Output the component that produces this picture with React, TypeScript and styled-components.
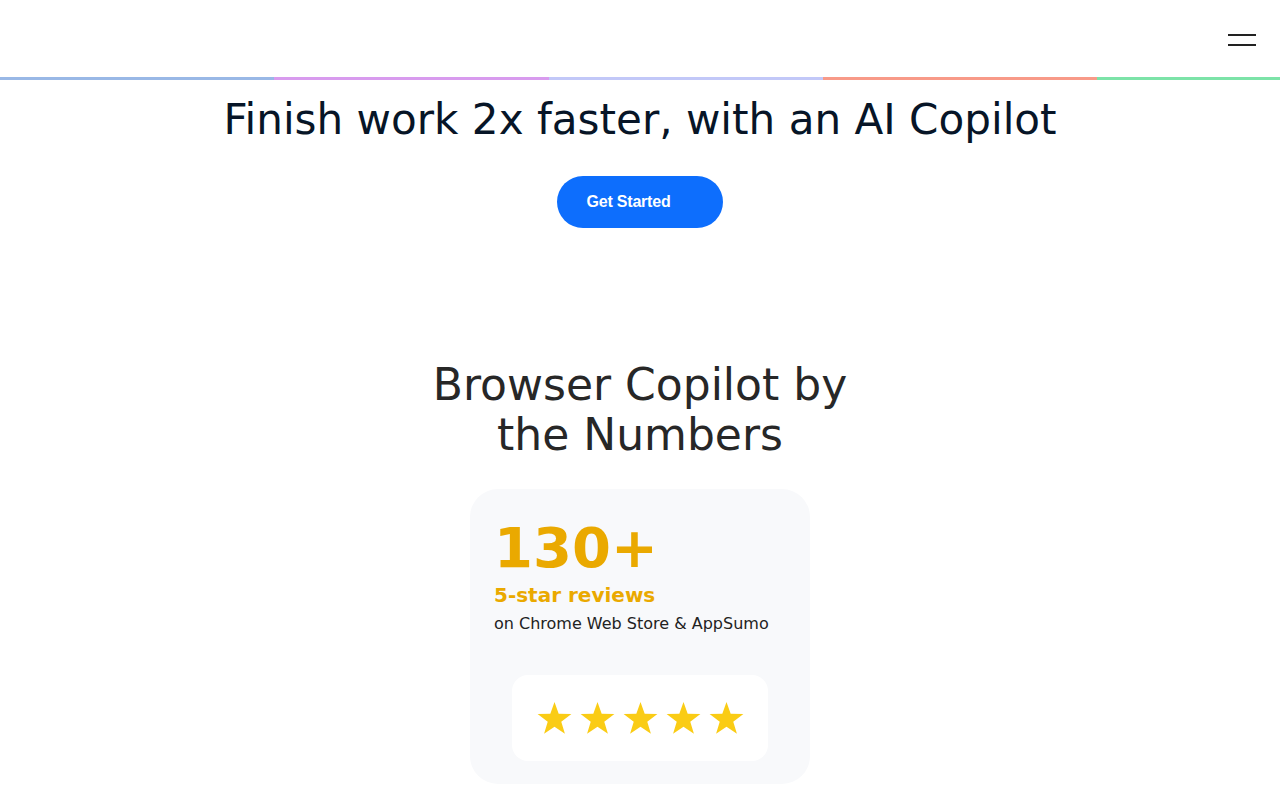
import React from "react";
import styled, { createGlobalStyle } from "styled-components";

const GlobalStyle = createGlobalStyle`
  html, body {
    margin: 0;
    padding: 0;
    background: #ffffff;
    font-family: "DejaVu Sans", "Noto Sans", sans-serif;
  }
  * { box-sizing: border-box; }
`;

const Page = styled.div`
  width: 100%;
  min-height: 800px;
  overflow: hidden;
`;

const Header = styled.header`
  height: 77px;
  display: flex;
  align-items: center;
  justify-content: flex-end;
  padding: 0 24px;
`;

const MenuButton = styled.button`
  width: 28px;
  height: 12px;
  padding: 0;
  border: 0;
  background: transparent;
  display: flex;
  flex-direction: column;
  justify-content: space-between;
  cursor: pointer;
  margin-top: 2px;
`;

const MenuLine = styled.span`
  display: block;
  width: 28px;
  height: 2px;
  background: #222222;
`;

const ColorBar = styled.div`
  display: flex;
  height: 3px;
  overflow: hidden;
`;

const BarSegment = styled.span<{ $color: string }>`
  flex: 0 0 274.3px;
  height: 100%;
  background: ${(p) => p.$color};
`;

const Hero = styled.section`
  display: flex;
  flex-direction: column;
  align-items: center;
  padding-top: 15px;
`;

const HeroTitle = styled.h1`
  margin: 0;
  font-size: 42.1px;
  font-weight: 400;
  line-height: normal;
  color: #071527;
  text-align: center;
`;

const PrimaryButton = styled.a`
  margin-top: 32px;
  height: 52px;
  display: inline-flex;
  align-items: center;
  padding: 0 52px 0 29px;
  border-radius: 26px;
  background: #0d6efd;
  color: #ffffff;
  font-family: "Liberation Sans", Arial, sans-serif;
  font-size: 16px;
  font-weight: 700;
  letter-spacing: -0.2px;
  text-decoration: none;
`;

const Stats = styled.section`
  display: flex;
  flex-direction: column;
  align-items: center;
  margin-top: 132px;
`;

const StatsTitle = styled.h2`
  margin: 0;
  max-width: 470px;
  font-size: 44px;
  font-weight: 400;
  line-height: 50px;
  color: #272727;
  text-align: center;
`;

const StatCard = styled.div`
  margin-top: 29px;
  width: 340px;
  padding: 31px 24px 23px;
  background: #f8f9fb;
  border-radius: 28px;
  display: flex;
  flex-direction: column;
`;

const StatNumber = styled.div`
  font-size: 56px;
  font-weight: 700;
  line-height: 1;
  color: #eaa900;
`;

const StatLabel = styled.div`
  margin-top: 7px;
  font-size: 20px;
  font-weight: 700;
  line-height: 24px;
  color: #eaa900;
`;

const StatNote = styled.div`
  margin-top: 5px;
  font-size: 16px;
  line-height: 24px;
  color: #222222;
`;

const StarBox = styled.div`
  margin: 39px auto 0;
  width: 256px;
  height: 86px;
  background: #ffffff;
  border-radius: 16px;
  display: flex;
  align-items: center;
  justify-content: center;
  gap: 6px;
`;

const StarIcon = styled.svg`
  width: 37px;
  height: 35px;
  display: block;
`;

const Star = () => (
  <StarIcon viewBox="0 0 24 23">
    <path
      d="M12 0.6 L14.75 8.4 L23.1 8.6 L16.45 13.65 L18.85 21.6 L12 16.85 L5.15 21.6 L7.55 13.65 L0.9 8.6 L9.25 8.4 Z"
      fill="#facc15"
    />
  </StarIcon>
);

const barColors = ["#99b8e6", "#d89bee", "#c2c8f8", "#f89a88", "#7ce3a8"];

export default function App() {
  return (
    <Page>
      <GlobalStyle />
      <Header>
        <MenuButton aria-label="Menu">
          <MenuLine />
          <MenuLine />
        </MenuButton>
      </Header>
      <ColorBar>
        {barColors.map((c) => (
          <BarSegment key={c} $color={c} />
        ))}
      </ColorBar>
      <Hero>
        <HeroTitle>Finish work 2x faster, with an AI Copilot</HeroTitle>
        <PrimaryButton href="#">Get Started</PrimaryButton>
      </Hero>
      <Stats>
        <StatsTitle>Browser Copilot by the Numbers</StatsTitle>
        <StatCard>
          <StatNumber>130+</StatNumber>
          <StatLabel>5-star reviews</StatLabel>
          <StatNote>on Chrome Web Store &amp; AppSumo</StatNote>
          <StarBox>
            <Star />
            <Star />
            <Star />
            <Star />
            <Star />
          </StarBox>
        </StatCard>
      </Stats>
    </Page>
  );
}
